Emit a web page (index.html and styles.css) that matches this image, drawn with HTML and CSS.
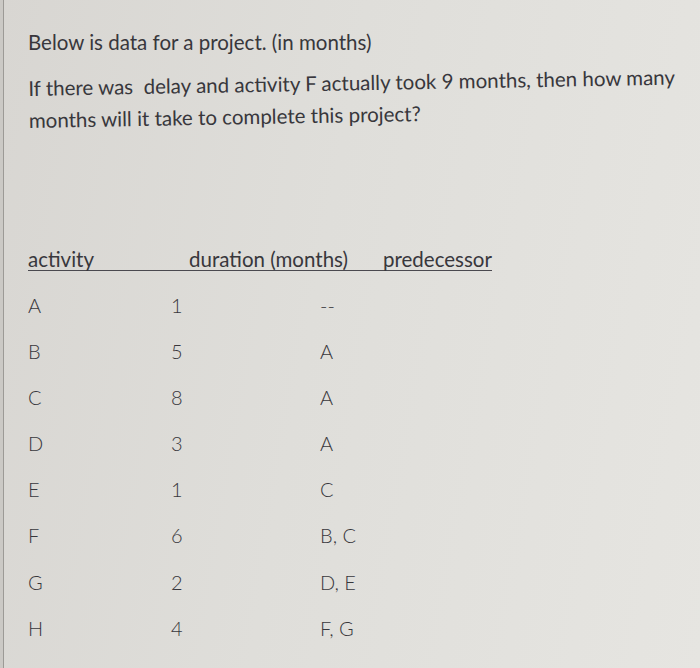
FILE: index.html
```html
<!DOCTYPE html>
<html>
<head>
<meta charset="utf-8">
<link rel="stylesheet" href="styles.css">
</head>
<body>
<div class="page">
  <p class="q first">Below is data for a project. (in months)</p>
  <p class="q second">If there was&nbsp; delay and activity F actually took 9 months, then how many months will it take to complete this project?</p>

  <div class="head">
    <span class="h1">activity</span>
    <span class="h2">duration (months)</span>
    <span class="h3">predecessor</span>
  </div>

  <div class="rows">
    <div class="row"><span class="c1">A</span><span class="c2">1</span><span class="c3">--</span></div>
    <div class="row"><span class="c1">B</span><span class="c2">5</span><span class="c3">A</span></div>
    <div class="row"><span class="c1">C</span><span class="c2">8</span><span class="c3">A</span></div>
    <div class="row"><span class="c1">D</span><span class="c2">3</span><span class="c3">A</span></div>
    <div class="row"><span class="c1">E</span><span class="c2">1</span><span class="c3">C</span></div>
    <div class="row"><span class="c1">F</span><span class="c2">6</span><span class="c3">B, C</span></div>
    <div class="row"><span class="c1">G</span><span class="c2">2</span><span class="c3">D, E</span></div>
    <div class="row"><span class="c1">H</span><span class="c2">4</span><span class="c3">F, G</span></div>
  </div>
</div>
</body>
</html>
```

FILE: styles.css
```css
html, body {
  margin: 0;
  padding: 0;
}
body {
  width: 700px;
  height: 668px;
  overflow: hidden;
  background: linear-gradient(100deg, #d8d6d2 0%, #dfdeda 45%, #e6e5e1 100%);
  font-family: "Lato", "Liberation Sans", sans-serif;
  color: #38373c;
}
.page {
  height: 668px;
  box-sizing: border-box;
  margin-left: 3px;
  border-left: 1px solid #9c9a96;
  padding: 28px 0 0 24px;
  box-shadow: -3px 0 0 #cbc9c5;
}
.q {
  margin: 0;
  font-size: 20.5px;
  width: 670px;
}
.first {
  line-height: 28px;
}
.second {
  margin-top: 16px;
  line-height: 32px;
  transform: rotate(-1deg);
  transform-origin: left top;
}
.head {
  display: inline-flex;
  align-items: baseline;
  margin-top: 112px;
  font-size: 20.5px;
  font-weight: 400;
  line-height: 22px;
  border-bottom: 1.5px solid #4a494f;
}
.h1 { width: 161px; }
.h2 { width: 194px; }
.rows {
  margin-top: 22px;
  display: flex;
  flex-direction: column;
  gap: 22.1px;
  font-size: 20px;
  font-weight: 300;
  line-height: 24px;
}
.row {
  display: flex;
}
.c1 { width: 143px; }
.c2 { width: 149px; }
```
